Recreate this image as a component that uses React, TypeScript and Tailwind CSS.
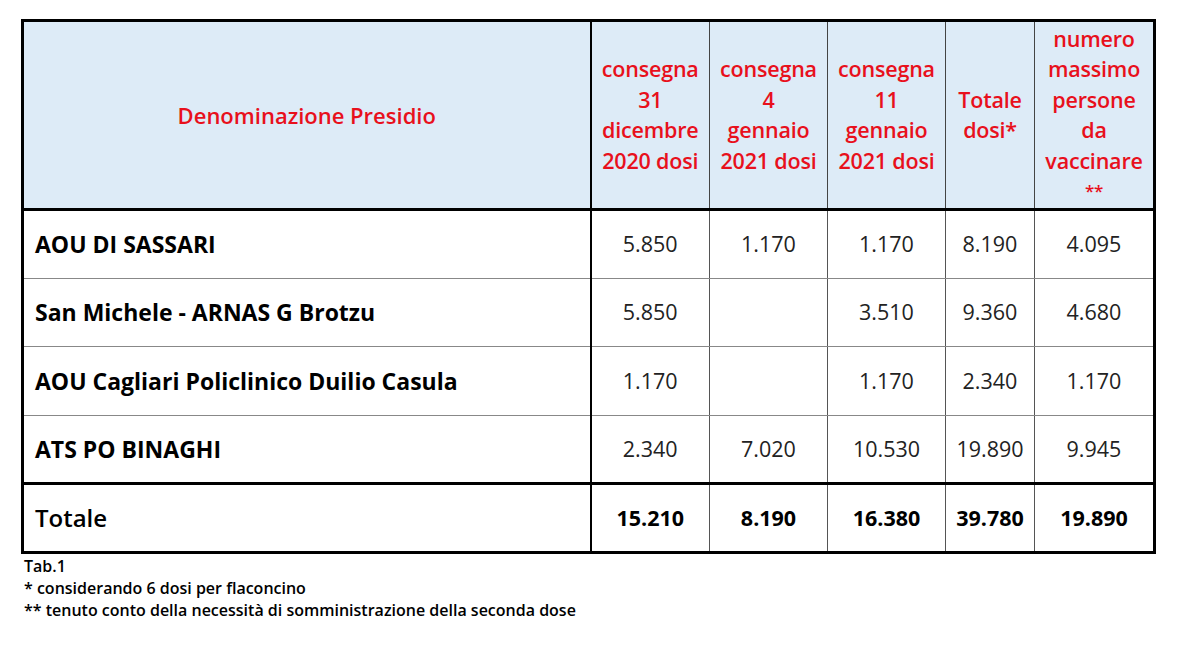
const rows = [
  { name: "AOU DI SASSARI", values: ["5.850", "1.170", "1.170", "8.190", "4.095"] },
  { name: "San Michele - ARNAS G Brotzu", values: ["5.850", "", "3.510", "9.360", "4.680"] },
  { name: "AOU Cagliari Policlinico Duilio Casula", values: ["1.170", "", "1.170", "2.340", "1.170"] },
  { name: "ATS PO BINAGHI", values: ["2.340", "7.020", "10.530", "19.890", "9.945"] },
];

const totals = ["15.210", "8.190", "16.380", "39.780", "19.890"];

const headers = [
  ["consegna", "31", "dicembre", "2020 dosi"],
  ["consegna", "4", "gennaio", "2021 dosi"],
  ["consegna", "11", "gennaio", "2021 dosi"],
  ["Totale", "dosi*"],
  ["numero", "massimo", "persone", "da", "vaccinare", "**"],
];

const font = { fontFamily: "'Open Sans', Lato, sans-serif" };

export default function App() {
  return (
    <div className="min-h-[657px] w-[1200px] bg-white pt-[19px] pl-[21px]" style={font}>
      <table className="w-[1132px] table-fixed border-collapse border-[3px] border-black">
        <colgroup>
          <col className="w-[568px]" />
          <col className="w-[119px]" />
          <col className="w-[118px]" />
          <col className="w-[118px]" />
          <col className="w-[89px]" />
          <col className="w-[120px]" />
        </colgroup>
        <thead>
          <tr className="h-[189px] bg-[#ddebf7]">
            <th className="border-r-2 border-b-[3px] border-black text-center align-middle text-[22px] font-semibold text-[#e8101c]">
              Denominazione Presidio
            </th>
            {headers.map((lines, i) => (
              <th
                key={i}
                className="border-b-[3px] border-l border-b-black border-l-[#444] text-center align-middle text-[21.5px] font-semibold leading-[30.5px] tracking-[-0.2px] text-[#e8101c]"
              >
                {lines.map((l, j) => (
                  <div key={j} className={l === "**" ? "text-[17px]" : ""}>
                    {l}
                  </div>
                ))}
              </th>
            ))}
          </tr>
        </thead>
        <tbody>
          {rows.map((r, i) => (
            <tr key={r.name} className="h-[68.5px]">
              <td
                className={`border-r-2 border-r-black pl-[11px] text-[23px] font-bold text-black ${
                  i < rows.length - 1 ? "border-b border-b-[#888]" : ""
                }`}
              >
                {r.name}
              </td>
              {r.values.map((v, j) => (
                <td
                  key={j}
                  className={`border-l border-l-[#555] text-center text-[21.5px] text-[#222] ${
                    i < rows.length - 1 ? "border-b border-b-[#888]" : ""
                  }`}
                >
                  {v}
                </td>
              ))}
            </tr>
          ))}
          <tr className="h-[69px]">
            <td className="border-t-[3px] border-r-2 border-black pl-[11px] text-[24px] font-semibold text-black">
              Totale
            </td>
            {totals.map((v, j) => (
              <td
                key={j}
                className="border-t-[3px] border-l border-t-black border-l-[#555] text-center text-[21.5px] font-bold text-black"
              >
                {v}
              </td>
            ))}
          </tr>
        </tbody>
      </table>
      <div className="mt-[1px] pl-[3px] text-[16px] font-semibold leading-[22px] text-black">
        <div>Tab.1</div>
        <div>* considerando 6 dosi per flaconcino</div>
        <div>** tenuto conto della necessità di somministrazione della seconda dose</div>
      </div>
    </div>
  );
}
